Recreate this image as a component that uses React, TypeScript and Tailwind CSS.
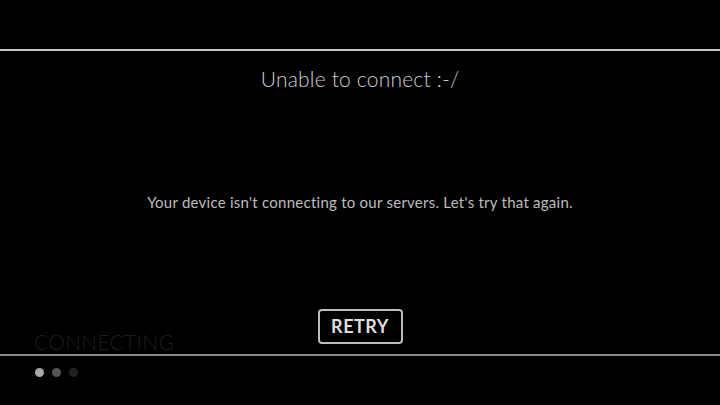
import React from "react";

const font = { fontFamily: "Lato, 'Open Sans', sans-serif" };

export default function App() {
  return (
    <div className="w-[720px] h-[405px] bg-black flex flex-col overflow-hidden" style={font}>
      <div className="h-[49px] shrink-0" />
      <div className="h-[2px] shrink-0 bg-[#c9c9c9]" />
      <div className="relative flex-1 flex flex-col items-center">
        <h1 className="mt-[15px] text-[21px] leading-[26px] font-light text-[#cfcfcf] tracking-[0.2px]">
          Unable to connect :-/
        </h1>
        <p className="mt-[100px] text-[15px] leading-[20px] font-normal text-[#bdbdbd] tracking-[0.25px]">
          Your device isn't connecting to our servers. Let's try that again.
        </p>
        <button className="mt-[97px] w-[85px] h-[35px] rounded-[4px] border-2 border-[#bdbdbd] text-[18px] font-bold text-[#dedede] tracking-[0.5px] flex items-center justify-center">
          RETRY
        </button>
        <span className="absolute left-[34px] bottom-[0px] text-[21px] leading-[24px] font-light text-[#1d1d1d] tracking-[0.3px]">
          CONNECTING
        </span>
      </div>
      <div className="h-[2px] shrink-0 bg-[#8a8a8a]" />
      <div className="h-[49px] shrink-0 flex items-start gap-[8px] pl-[35px] pt-[12px]">
        <span className="w-[9px] h-[9px] rounded-full bg-[#a8a8a8]" />
        <span className="w-[9px] h-[9px] rounded-full bg-[#555555]" />
        <span className="w-[9px] h-[9px] rounded-full bg-[#222222]" />
      </div>
    </div>
  );
}
